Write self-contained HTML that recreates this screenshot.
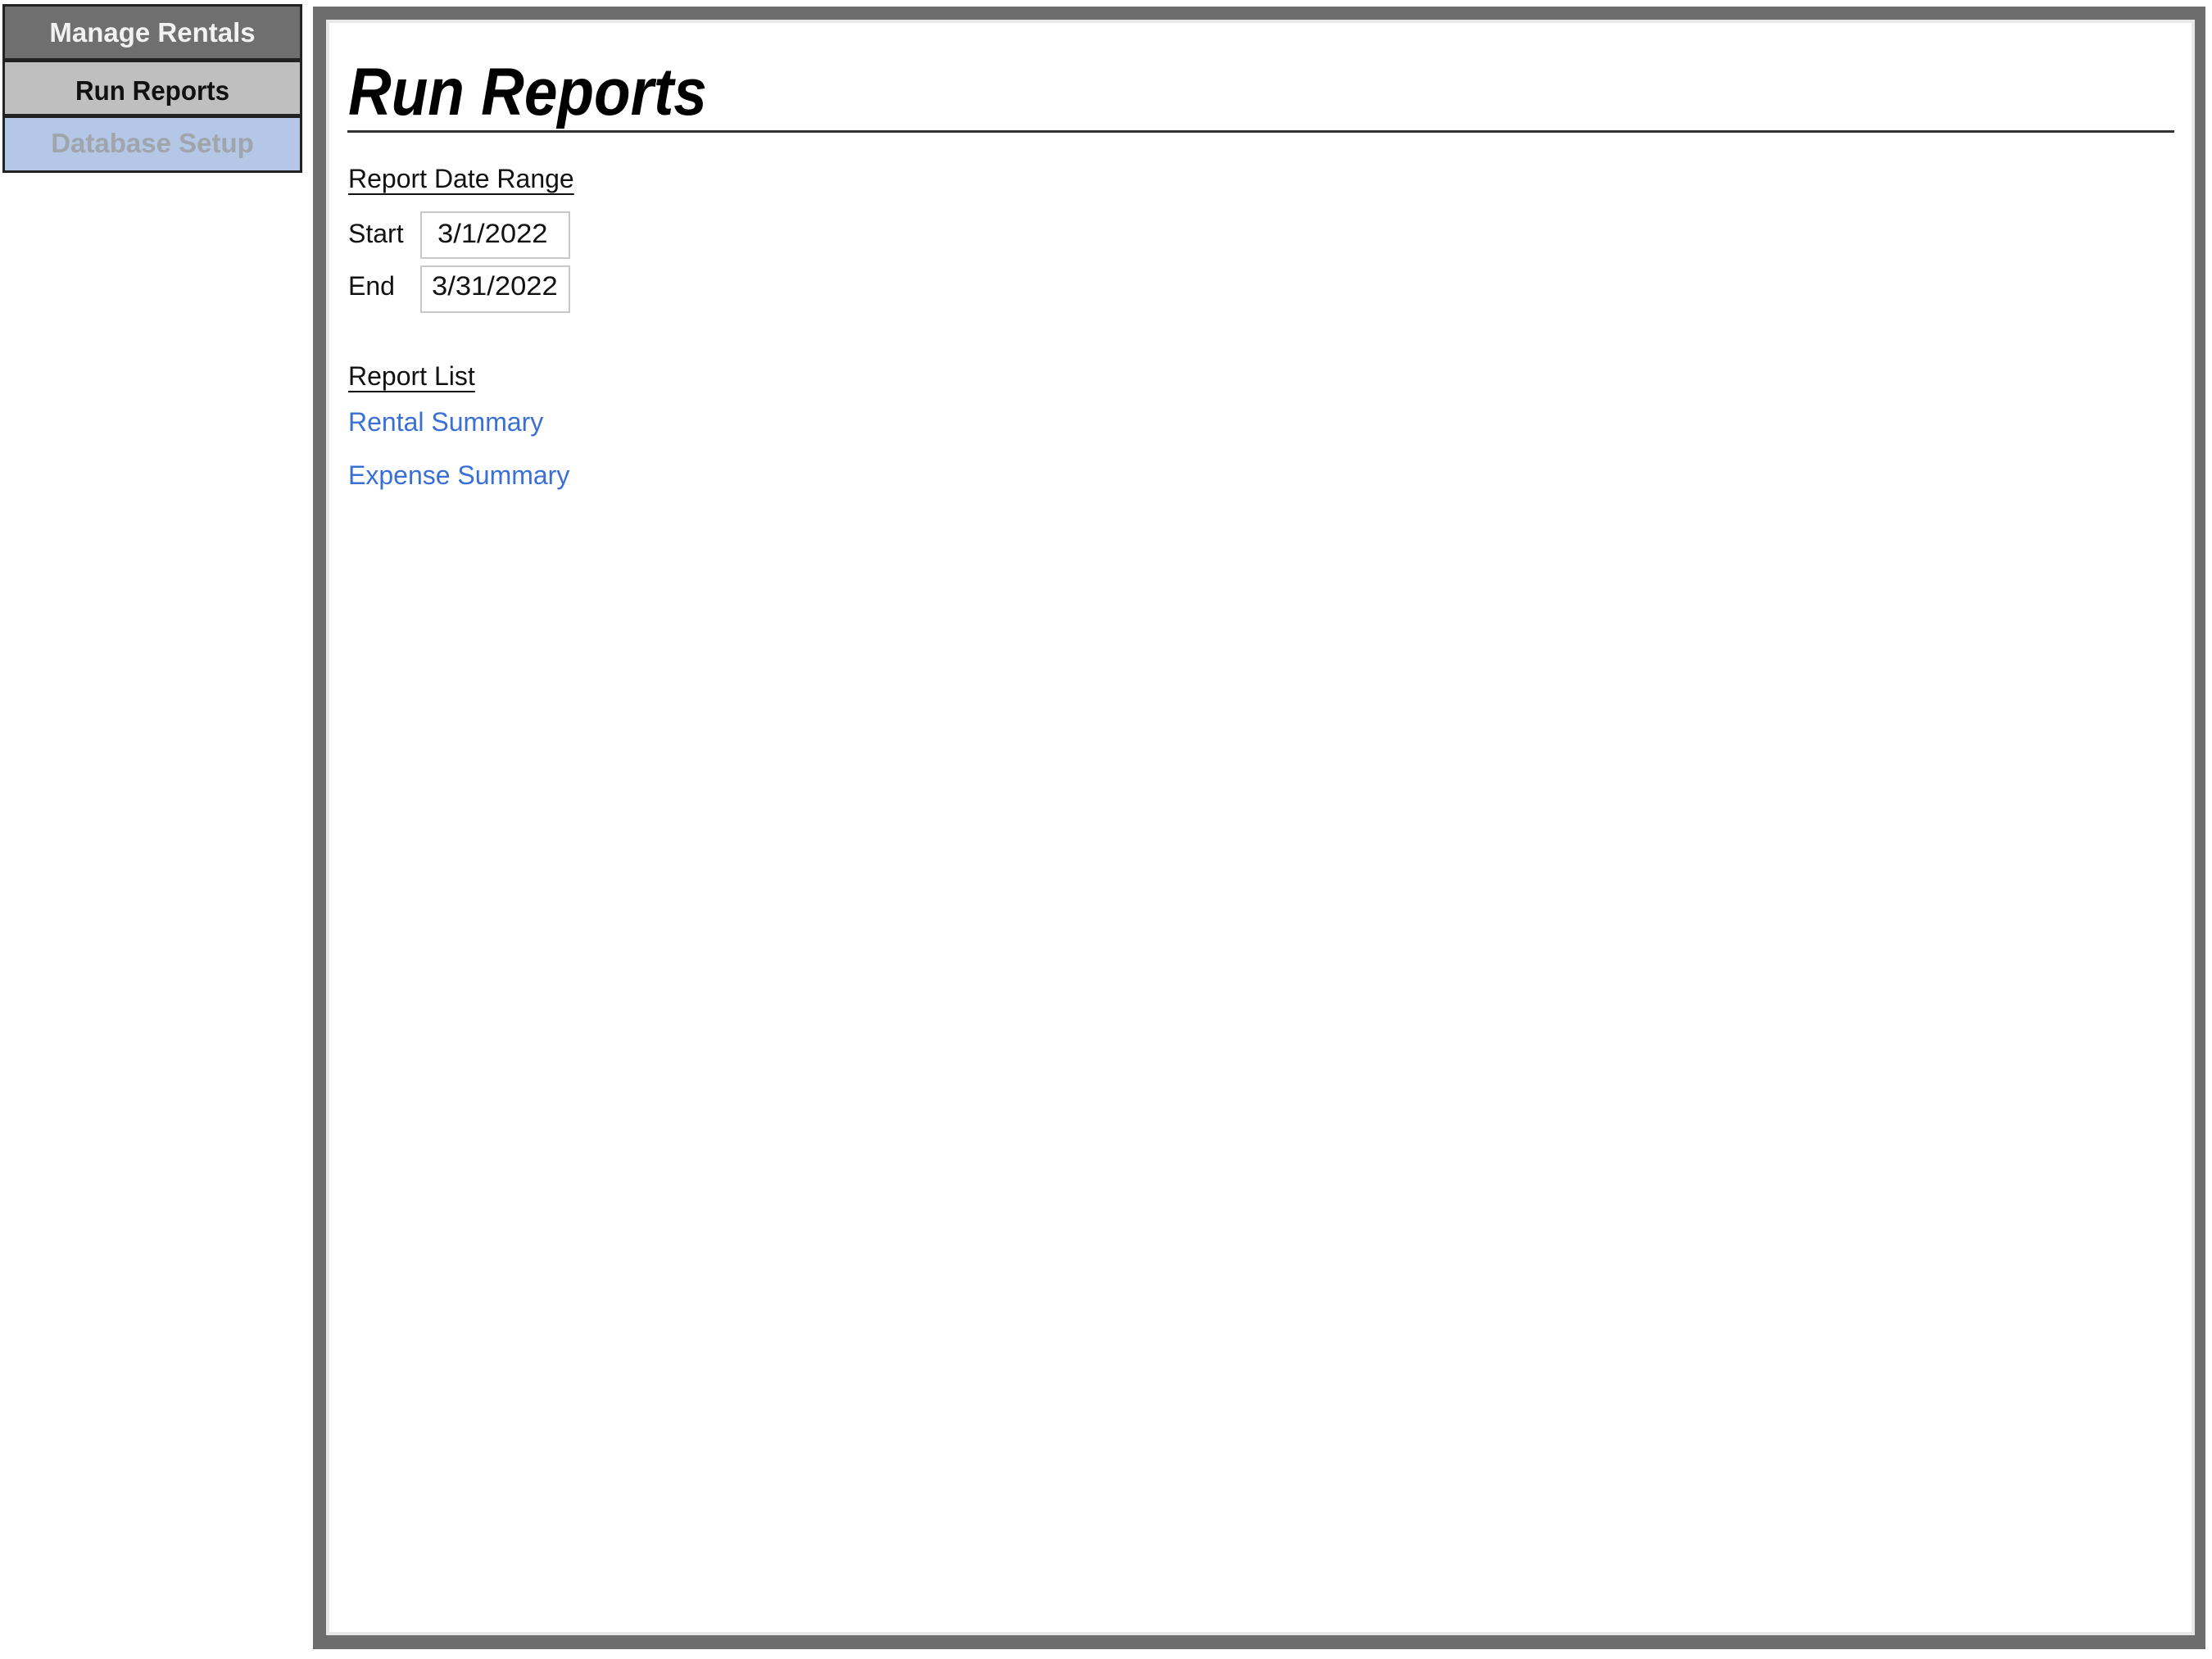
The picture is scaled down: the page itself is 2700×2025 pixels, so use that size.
<!DOCTYPE html>
<html><head><meta charset="utf-8"><style>
html,body{margin:0;padding:0;background:#fff;width:2700px;height:2025px;overflow:hidden;position:relative;font-family:"Liberation Sans",Arial,sans-serif}
.a{position:absolute;line-height:normal;white-space:nowrap}
.s{display:inline-block;transform-origin:left top}
.btn{position:absolute;left:3px;width:366px;border:3px solid #222;box-sizing:border-box}
.bt{position:absolute;left:0;width:100%;text-align:center;line-height:normal;font-weight:bold;font-size:33px;white-space:nowrap}
.bt span{display:inline-block;transform-origin:center top}
.u{text-decoration:underline;text-decoration-thickness:2px;text-underline-offset:7px}
.box{position:absolute;left:513px;width:183px;height:58px;border:2px solid #c8c8c8;box-sizing:border-box;background:#fff}
</style></head><body>
<div class="btn" style="top:5px;height:69px;background:#6f6f6f"><div class="bt" style="top:13px;color:#f2f2f2"><span>Manage Rentals</span></div></div>
<div class="btn" style="top:73px;height:69px;background:#bfbfbf"><div class="bt" style="top:16px;color:#111"><span style="transform:scaleX(0.95)">Run Reports</span></div></div>
<div class="btn" style="top:141px;height:70px;background:#b4c7e7"><div class="bt" style="top:12px;color:#a0a4ab"><span>Database Setup</span></div></div>

<div style="position:absolute;left:382px;top:8px;width:2310px;height:2005px;background:#6d6d6d"></div>
<div style="position:absolute;left:398px;top:24px;width:2281px;height:1972px;background:#e8e8e8"></div>
<div style="position:absolute;left:402px;top:28px;width:2273px;height:1964px;background:#fff"></div>

<div class="a" style="left:425px;top:66px;font-size:82px;font-weight:bold;font-style:italic;color:#000"><span class="s" style="transform:scaleX(0.89)">Run Reports</span></div>
<div style="position:absolute;left:424px;top:159px;width:2230px;height:3px;background:#333"></div>

<div class="a" style="left:425px;top:200px;font-size:32px;color:#111"><span class="s u" style="transform:scaleX(1.0)">Report Date Range</span></div>
<div class="a" style="left:425px;top:267px;font-size:32px;color:#111"><span class="s">Start</span></div>
<div class="a" style="left:425px;top:331px;font-size:32px;color:#111"><span class="s">End</span></div>
<div class="box" style="top:258px"></div>
<div class="box" style="top:324px"></div>
<div class="a" style="left:534px;top:267px;font-size:32px;color:#111"><span class="s" style="transform:scaleX(1.08)">3/1/2022</span></div>
<div class="a" style="left:527px;top:331px;font-size:32px;color:#111"><span class="s" style="transform:scaleX(1.08)">3/31/2022</span></div>

<div class="a" style="left:425px;top:441px;font-size:32px;color:#111"><span class="s u">Report List</span></div>
<div class="a" style="left:425px;top:497px;font-size:32px;color:#3a6fd4"><span class="s">Rental Summary</span></div>
<div class="a" style="left:425px;top:562px;font-size:32px;color:#3a6fd4"><span class="s">Expense Summary</span></div>
</body></html>
